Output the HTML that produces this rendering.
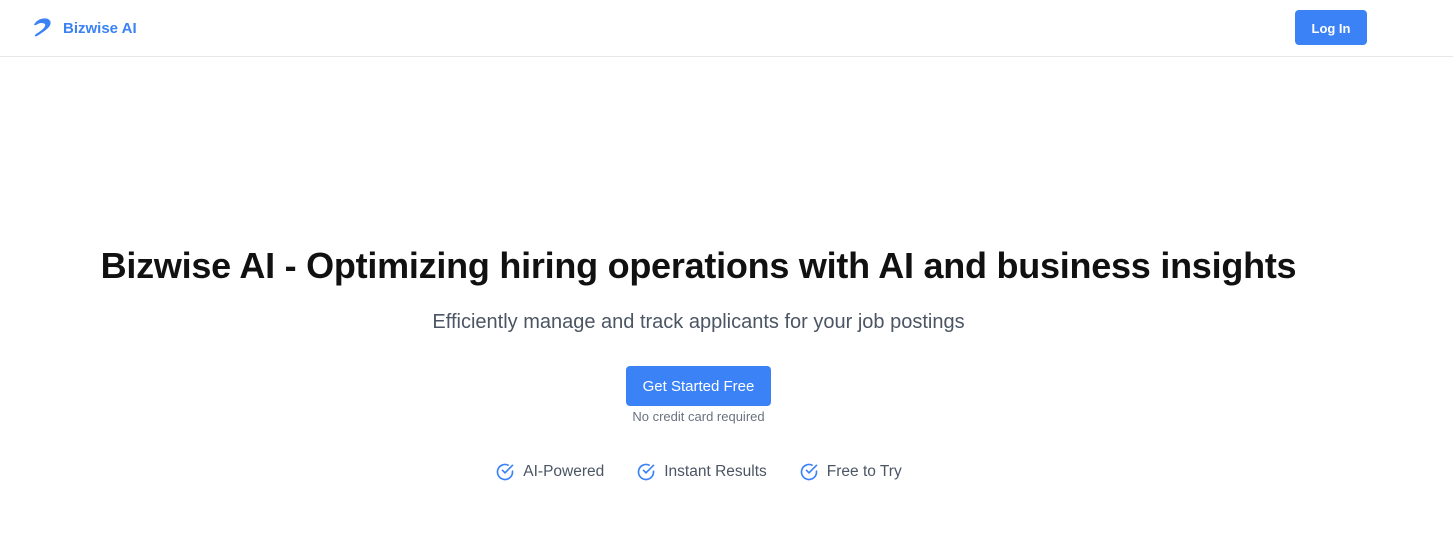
<!DOCTYPE html>
<html><head><meta charset="utf-8"><style>
*{margin:0;padding:0;box-sizing:border-box}
body{width:1453px;height:557px;background:#fff;font-family:"Liberation Sans",sans-serif;position:relative;overflow:hidden}
.nav{height:57px;border-bottom:1px solid #e5e7eb;position:relative}
.logo{position:absolute;left:31px;top:17px;display:flex;align-items:center;gap:8px;color:#3b82f6;font-weight:bold;font-size:15px}
.login{position:absolute;left:1295px;top:10px;width:72px;height:35px;background:#3b82f6;color:#fff;border-radius:4px;font-weight:bold;font-size:13px;display:flex;align-items:center;justify-content:center;padding-top:2px}
.wrap{position:absolute;left:0;width:1397px;text-align:center}
h1{font-size:36px;font-weight:bold;color:#111;letter-spacing:-0.25px}
.sub{font-size:20px;color:#4b5563}
.btn{display:inline-block;background:#3b82f6;color:#fff;font-size:15px;width:145px;height:40px;line-height:42px;border-radius:4px}
.nc{font-size:13px;color:#6b7280}
.feats{display:flex;justify-content:center;gap:32px;font-size:15.5px;color:#4b5563;align-items:center}
.feats span{display:flex;align-items:center;gap:8px}
</style></head><body>
<div class="nav">
<div class="logo"><svg width="24" height="22" viewBox="0 0 24 22"><path d="M3 8C5 3 12 0 17 2c4 2 3 6 0 9-3 3-8 6-11 8-2 1-3 0-1-2 3-2 8-5 9-8 1-2-1-3-4-3C7 6 5 9 3 8z" fill="#3b82f6"/></svg>Bizwise AI</div>
<div class="login">Log In</div>
</div>
<div class="wrap" style="top:245px"><h1>Bizwise AI - Optimizing hiring operations with AI and business insights</h1></div>
<div class="wrap" style="top:311px"><div class="sub">Efficiently manage and track applicants for your job postings</div></div>
<div class="wrap" style="top:366px"><div class="btn">Get Started Free</div></div>
<div class="wrap" style="top:409px"><div class="nc">No credit card required</div></div>
<div class="wrap" style="top:462px"><div class="feats">
<span><svg width="20" height="20" viewBox="0 0 24 24" fill="none" stroke="#3b82f6" stroke-width="2" stroke-linecap="round"><path d="M21 11.1V12a9 9 0 1 1-5.3-8.2"/><path d="M21 4 12 13l-3-3"/></svg>AI-Powered</span>
<span><svg width="20" height="20" viewBox="0 0 24 24" fill="none" stroke="#3b82f6" stroke-width="2" stroke-linecap="round"><path d="M21 11.1V12a9 9 0 1 1-5.3-8.2"/><path d="M21 4 12 13l-3-3"/></svg>Instant Results</span>
<span><svg width="20" height="20" viewBox="0 0 24 24" fill="none" stroke="#3b82f6" stroke-width="2" stroke-linecap="round"><path d="M21 11.1V12a9 9 0 1 1-5.3-8.2"/><path d="M21 4 12 13l-3-3"/></svg>Free to Try</span>
</div></div>
</body></html>
